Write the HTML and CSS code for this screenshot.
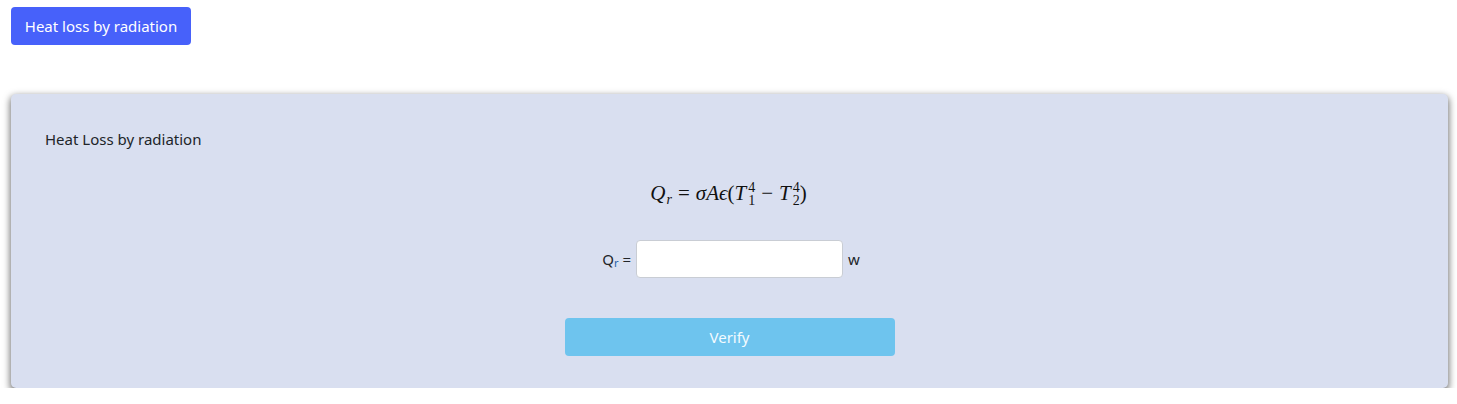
FILE: index.html
```html
<!DOCTYPE html>
<html>
<head>
<meta charset="utf-8">
<link rel="stylesheet" href="styles.css">
</head>
<body>
<div class="page">
  <button class="btn-primary">Heat loss by radiation</button>
  <div class="card">
    <div class="card-title">Heat Loss by radiation</div>
    <div class="formula">
      <div class="formula-line"><span class="mi">Q</span><span class="sub mi">r</span><span class="op">=</span><span class="mi">σ</span><span class="mi">A</span><span class="mi">ϵ</span><span class="paren">(</span><span class="mi">T</span><span class="supsub"><span class="sup">4</span><span class="sb">1</span></span><span class="op">−</span><span class="mi">T</span><span class="supsub"><span class="sup">4</span><span class="sb">2</span></span><span class="paren">)</span></div>
    </div>
    <div class="answer-row">
      <label class="answer-label">Q<sub class="label-sub">r</sub> =</label>
      <input class="answer-input" type="text">
      <span class="unit">w</span>
    </div>
    <div class="verify-row">
      <button class="btn-verify">Verify</button>
    </div>
  </div>
</div>
</body>
</html>
```

FILE: styles.css
```css
* { box-sizing: border-box; }
html, body { margin: 0; padding: 0; background: #fff; }
body {
  font-family: "Noto Sans", "Open Sans", sans-serif;
  font-size: 15px;
  color: #212529;
}
.page {
  padding: 7px 9px 0 11px;
}
.btn-primary {
  display: block;
  height: 38px;
  width: 180px;
  padding: 0 12px;
  background: #4761fa;
  color: #fff;
  border: none;
  border-radius: 4px;
  font-family: inherit;
  font-size: 15px;
}
.card {
  margin-top: 49px;
  background: #d9dff0;
  border-radius: 5px;
  box-shadow: 0 3px 7px 1px rgba(0,0,0,0.55);
  height: 294px;
  padding: 34px 34px 0 34px;
}
.card-title {
  line-height: 22px;
  height: 22px;
}
.formula {
  margin-top: 24px;
  height: 44px;
  display: flex;
  justify-content: center;
  align-items: center;
}
.formula-line {
  font-family: "Liberation Serif", "DejaVu Serif", serif;
  font-size: 21px;
  line-height: 30px;
  color: #111;
  white-space: nowrap;
  padding-right: 2px;
}
.mi { font-style: italic; }
.sub { font-size: 14px; display: inline-block; vertical-align: -4px; margin-left: 1px; }
.op { margin: 0 6px; }
.supsub {
  display: inline-block;
  vertical-align: -5px;
  font-size: 14px;
  line-height: 13px;
  margin-left: 2px;
}
.sup, .sb { display: block; }
.answer-row {
  margin-top: 22px;
  display: flex;
  justify-content: center;
  align-items: center;
  gap: 5px;
  height: 38px;
  padding-left: 3px;
}
.answer-label { font-size: 15px; }
.label-sub { font-size: 11px; color: #1f5fa8; vertical-align: -2px; }
.answer-input {
  width: 207px;
  height: 38px;
  border: 1px solid #c9cdd4;
  border-radius: 4px;
  background: #fff;
}
.unit { font-size: 15px; }
.verify-row {
  margin-top: 40px;
  display: flex;
  justify-content: center;
}
.btn-verify {
  width: 330px;
  height: 38px;
  background: #6ec4ee;
  color: #f4fbff;
  border: none;
  border-radius: 4px;
  font-family: inherit;
  font-size: 15px;
}
```
